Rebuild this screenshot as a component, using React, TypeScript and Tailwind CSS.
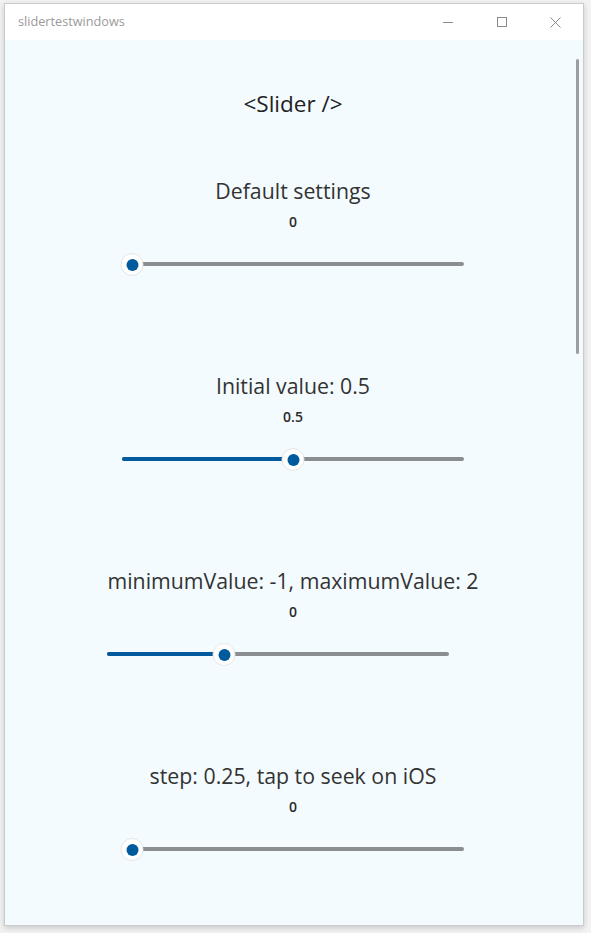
import React from 'react';

type SliderProps = {
  value: number;
  min?: number;
  max?: number;
  className?: string;
};

function Slider({ value, min = 0, max = 1, className = '' }: SliderProps) {
  const ratio = (value - min) / (max - min);
  const thumbX = 10 + ratio * 322;

  return (
    <div className={`relative h-[24px] w-[342px] ${className}`}>
      <div className="absolute left-0 right-0 top-[10px] h-[4px] rounded-full bg-[#8b8e91]" />
      <div
        className="absolute left-0 top-[10px] h-[4px] rounded-full bg-[#005a9e]"
        style={{ width: ratio > 0 ? thumbX : 0 }}
      />
      <div
        className="absolute top-[1px] flex h-[23px] w-[23px] -translate-x-1/2 items-center justify-center rounded-full border border-[#e3e6e8] bg-white"
        style={{ left: thumbX }}
      >
        <div className="h-[12px] w-[12px] rounded-full bg-[#005a9e]" />
      </div>
    </div>
  );
}

function Section({
  title,
  label,
  children,
}: {
  title: string;
  label: string;
  children: React.ReactNode;
}) {
  return (
    <div className="flex flex-col items-center">
      <p className="text-[21.3px] leading-[27px] text-[#333]">{title}</p>
      <p className="mt-[8px] text-[14px] font-semibold leading-[20px] text-[#2a2a2a]">{label}</p>
      <div className="mt-[20px]">{children}</div>
    </div>
  );
}

export default function App() {
  return (
    <div className="h-[933px] w-[591px] bg-[#f3f3f3] pl-[4px] pt-[3px] font-['Open_Sans',sans-serif]">
      <div className="flex h-[923px] w-[580px] flex-col border border-[#c9cbcd] shadow-[0_2px_6px_rgba(0,0,0,0.18)]">
        <div className="flex h-[36px] shrink-0 items-center bg-white pl-[13px]">
          <span className="text-[12.7px] text-[#9a9a9a]">slidertestwindows</span>
          <div className="ml-auto flex items-center">
            <div className="flex w-[54px] justify-center">
              <div className="h-px w-[10px] bg-[#8a8a8a]" />
            </div>
            <div className="flex w-[54px] justify-center">
              <div className="h-[10px] w-[10px] border border-[#8a8a8a]" />
            </div>
            <div className="flex w-[54px] justify-center pr-[2px]">
              <svg width="11" height="11" viewBox="0 0 11 11" fill="none" stroke="#8a8a8a" strokeWidth="1">
                <path d="M0.5 0.5L10.5 10.5M10.5 0.5L0.5 10.5" />
              </svg>
            </div>
          </div>
        </div>

        <div className="relative flex-1 bg-[#f3fbfe]">
          <div className="absolute right-[4px] top-[19px] h-[295px] w-[3px] rounded-full bg-[#9a9ea2]" />
          <div className="flex flex-col items-center pr-[2px] pt-[50px]">
            <p className="text-[22.5px] leading-[27px] text-[#222]">&lt;Slider /&gt;</p>

            <div className="mt-[60px] flex flex-col gap-[96px]">
              <Section title="Default settings" label="0">
                <Slider value={0} />
              </Section>
              <Section title="Initial value: 0.5" label="0.5">
                <Slider value={0.5} />
              </Section>
              <Section title="minimumValue: -1, maximumValue: 2" label="0">
                <Slider value={0} min={-1} max={2} className="mr-[30px]" />
              </Section>
              <Section title="step: 0.25, tap to seek on iOS" label="0">
                <Slider value={0} />
              </Section>
            </div>
          </div>
        </div>
      </div>
    </div>
  );
}
